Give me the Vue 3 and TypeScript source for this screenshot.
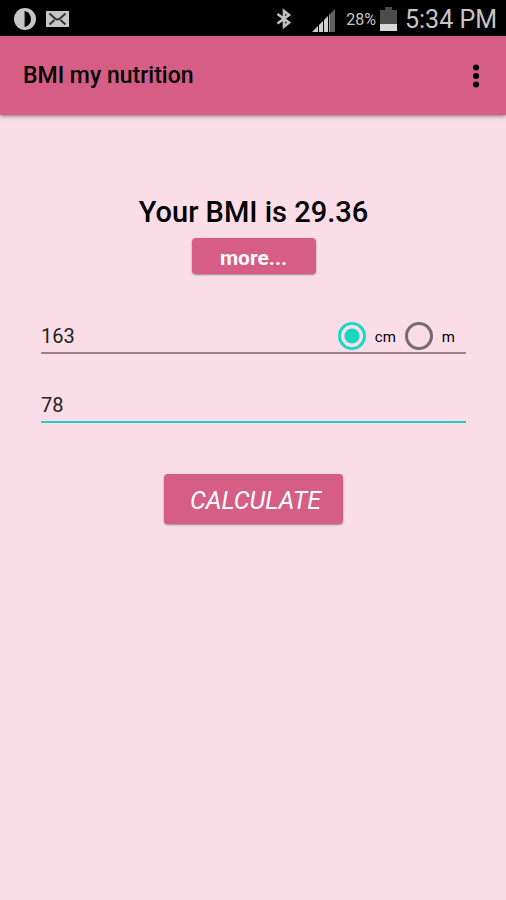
<script setup lang="ts">
import { ref } from 'vue'

type Unit = 'cm' | 'm'

const height = ref('163')
const weight = ref('78')
const unit = ref<Unit>('cm')
const bmi = ref('29.36')

function calculate(): void {
  const metres = unit.value === 'cm' ? Number(height.value) / 100 : Number(height.value)
  const kilos = Number(weight.value)
  if (metres > 0 && kilos > 0) {
    bmi.value = (kilos / (metres * metres)).toFixed(2)
  }
}
</script>

<template>
  <div class="screen">
    <div class="status">
      <div class="status-left">
        <svg width="22" height="22" viewBox="0 0 22 22" aria-hidden="true">
          <circle cx="11" cy="11" r="11" fill="#c6c6c6" />
          <path d="M11 3a9 8.500 0 0 1 0 16z" fill="#000" />
          <path d="M11 3v16" stroke="#222" stroke-width="1" />
        </svg>
        <svg width="23" height="16" viewBox="0 0 23 16" aria-hidden="true">
          <rect width="23" height="16" fill="#c6c6c6" />
          <path d="M3.500 2.500 9 7.500q2.500 2 5 0l5.500-5M3.500 13.500 8.500 9M19.500 13.500l-5-4.500" fill="none" stroke="#333" stroke-width="2" />
        </svg>
      </div>
      <div class="status-right">
        <svg class="bluetooth" width="16" height="22" viewBox="0 0 16 22" aria-hidden="true">
          <path d="M1.500 6 13 14.500 8 18.500V3l5 4L1.500 15.500" fill="none" stroke="#c0c0c0" stroke-width="2.600" />
        </svg>
        <svg class="signal" width="24" height="24" viewBox="0 0 24 24" aria-hidden="true">
          <path d="M0 24l6-6v6zM7 24v-7l4-4v11zM12 24V12l4-4v16z" fill="#d0d0d0" />
          <path d="M17 24V7l6-6v23z" fill="#606060" />
          <path d="M17 24V7l1-1v18z" fill="#a0a0a0" />
        </svg>
        <span class="percent">28%</span>
        <svg class="battery" width="17" height="24" viewBox="0 0 17 24" aria-hidden="true">
          <path d="M5 0h7v3h5v14H0V3h5z" fill="#4c4c4c" />
          <path d="M0 17h17v7H0z" fill="#d8d8d8" />
        </svg>
        <span class="time">5:34 PM</span>
      </div>
    </div>

    <header class="bar">
      <h1>BMI my nutrition</h1>
      <button class="menu" type="button" aria-label="Menu">
        <svg width="6" height="24" viewBox="0 0 6 24" aria-hidden="true">
          <circle cx="3" cy="3.500" r="3" />
          <circle cx="3" cy="12" r="3" />
          <circle cx="3" cy="20.500" r="3" />
        </svg>
      </button>
    </header>

    <main>
      <h2>Your BMI is {{ bmi }}</h2>
      <button class="more" type="button">more...</button>
      <form @submit.prevent="calculate">
        <div class="field">
          <input v-model="height" class="value" type="text" inputmode="decimal" aria-label="Height" />
          <label class="unit"><input v-model="unit" type="radio" name="unit" value="cm" /><span>cm</span></label>
          <label class="unit"><input v-model="unit" type="radio" name="unit" value="m" /><span>m</span></label>
        </div>
        <div class="field active">
          <input v-model="weight" class="value" type="text" inputmode="decimal" aria-label="Weight" />
        </div>
        <button class="calculate" type="submit">CALCULATE</button>
      </form>
    </main>
  </div>
</template>

<style>
body {
  background: #fadde7;
}
</style>

<style scoped>
.screen {
  min-height: 100vh;
  background: #fadde7;
  color: #000;
  font-family: Roboto, "Liberation Sans", sans-serif;
}

.status {
  display: flex;
  align-items: center;
  justify-content: space-between;
  height: 36px;
  padding: 2px 9px 0 14px;
  box-sizing: border-box;
  background: #000;
  color: #c6c6c6;
}

.status-left,
.status-right {
  display: flex;
  align-items: center;
}

.status-left {
  gap: 10px;
}

.bluetooth {
  margin-right: 20px;
}

.signal {
  margin-right: 10px;
  padding-top: 2px;
}

.percent {
  margin-right: 4px;
  font-size: 16px;
}

.battery {
  margin-right: 8px;
}

.time {
  font-size: 25px;
}

.bar {
  display: flex;
  align-items: center;
  justify-content: space-between;
  height: 79px;
  padding: 0 19px 0 23px;
  box-sizing: border-box;
  background: #d65d85;
  box-shadow: 0 1px 4px rgba(0, 0, 0, 0.5);
}

h1 {
  margin: 0;
  font-size: 23px;
  font-weight: 500;
}

button {
  border: 0;
  font-family: inherit;
  cursor: pointer;
}

.menu {
  display: flex;
  padding: 8px;
  background: none;
}

main {
  display: flex;
  flex-direction: column;
  align-items: center;
  padding: 80px 40px 40px 41px;
}

h2 {
  margin: 0;
  font-size: 29px;
  font-weight: 500;
  line-height: 34px;
}

.more,
.calculate {
  border-radius: 4px;
  background: #d65d85;
  box-shadow: 0 1px 2px rgba(0, 0, 0, 0.4);
  color: #fff;
}

.more {
  width: 124px;
  height: 36px;
  margin-top: 9px;
  padding: 4px 0 0;
  font-size: 21px;
  font-weight: 700;
}

form {
  display: flex;
  flex-direction: column;
  align-items: center;
  width: 100%;
  margin-top: 44px;
}

.field {
  display: flex;
  align-items: center;
  width: 100%;
  height: 36px;
  padding: 2px 11px 0 0;
  box-sizing: border-box;
  border-bottom: 2px solid #a17f8a;
}

.field.active {
  margin-top: 33px;
  border-color: #2acdbd;
}

.value {
  flex: 1;
  min-width: 0;
  padding: 0;
  border: 0;
  outline: 0;
  background: none;
  color: #222;
  font-family: inherit;
  font-size: 20px;
}

.unit {
  display: flex;
  align-items: center;
  gap: 9px;
  margin-left: 9px;
  font-size: 15px;
}

.unit span {
  padding-top: 2px;
}

.unit input {
  width: 28px;
  height: 28px;
  margin: 0;
  border: 3px solid #746a70;
  border-radius: 50%;
  appearance: none;
}

.unit input:checked {
  border-color: #18d8c2;
  background: radial-gradient(circle, #18d8c2 0 7px, transparent 8px);
}

.calculate {
  width: 179px;
  height: 50px;
  margin-top: 51px;
  padding: 2px 0 0 4px;
  font-size: 25px;
  font-style: italic;
}
</style>
